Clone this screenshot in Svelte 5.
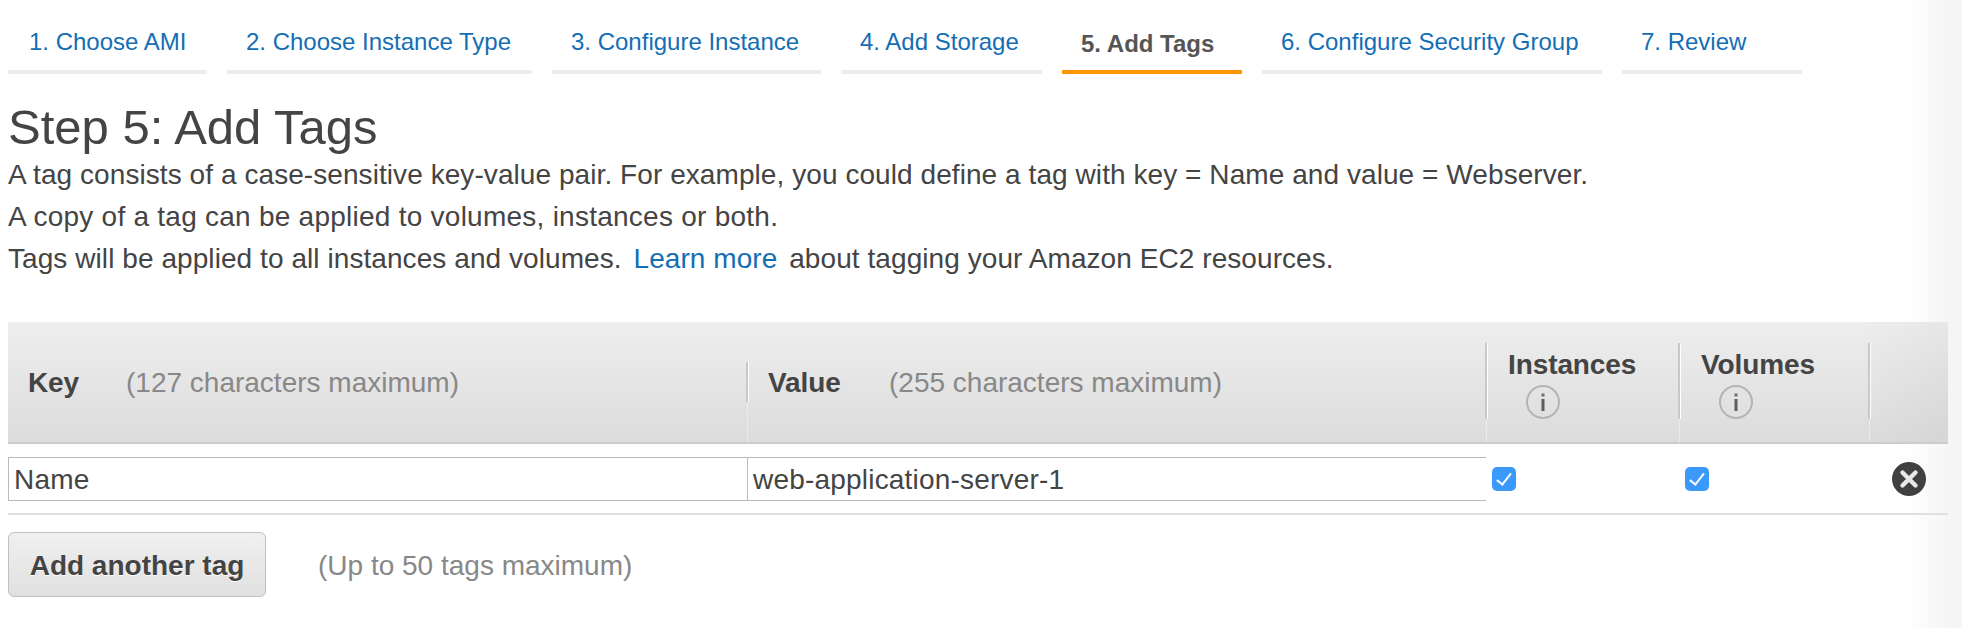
<script>
  const steps = [
    '1. Choose AMI',
    '2. Choose Instance Type',
    '3. Configure Instance',
    '4. Add Storage',
    '5. Add Tags',
    '6. Configure Security Group',
    '7. Review'
  ];
  const active = 4;

  let tagKey = $state('Name');
  let tagValue = $state('web-application-server-1');
  let onInstances = $state(true);
  let onVolumes = $state(true);
</script>

{#snippet infoIcon()}
  <svg class="info" width="36" height="36" viewBox="0 0 36 36" aria-hidden="true">
    <circle cx="18" cy="18" r="16" fill="none" stroke="#b4b4b4" stroke-width="2" />
    <rect x="16.5" y="15" width="3" height="12" fill="#5c5c5c" />
    <rect x="16.5" y="9.5" width="3" height="3" fill="#707070" />
  </svg>
{/snippet}

<div class="page">
  <nav class="steps">
    {#each steps as step, i}
      <a href="#step" class="step" class:active={i === active}>{step}</a>
    {/each}
  </nav>

  <h1>Step 5: Add Tags</h1>
  <div class="intro">
    <p>A tag consists of a case-sensitive key-value pair. For example, you could define a tag with key = Name and value = Webserver.</p>
    <p>A copy of a tag can be applied to volumes, instances or both.</p>
    <p>Tags will be applied to all instances and volumes. <a href="#learn">Learn more</a> about tagging your Amazon EC2 resources.</p>
  </div>

  <div class="table">
    <div class="head">
      <div class="th text"><b>Key</b><span class="hint">(127 characters maximum)</span></div>
      <div class="th text divided"><b>Value</b><span class="hint">(255 characters maximum)</span></div>
      <div class="th check tall">
        <b>Instances</b>
        {@render infoIcon()}
      </div>
      <div class="th check tall">
        <b>Volumes</b>
        {@render infoIcon()}
      </div>
      <div class="th last tall"></div>
    </div>
    <div class="row">
      <input class="cell-input" bind:value={tagKey} />
      <input class="cell-input second" bind:value={tagValue} />
      <div class="cell"><input type="checkbox" bind:checked={onInstances} /></div>
      <div class="cell"><input type="checkbox" bind:checked={onVolumes} /></div>
      <div class="cell remove">
        <svg width="36" height="36" viewBox="0 0 36 36" aria-label="Remove tag">
          <circle cx="18" cy="18" r="17" fill="#404040" />
          <path d="M11.5 11.5l13 13M24.5 11.5l-13 13" stroke="#e8e8e8" stroke-width="4.4" stroke-linecap="round" />
        </svg>
      </div>
    </div>
  </div>

  <div class="actions">
    <button type="button">Add another tag</button>
    <span class="hint">(Up to 50 tags maximum)</span>
  </div>
</div>

<style>
  :global(body) {
    margin: 0;
  }

  .page {
    box-sizing: border-box;
    height: 628px;
    padding: 0 14px 0 8px;
    font-family: "Liberation Sans", Arial, sans-serif;
    color: #444;
    background: linear-gradient(to right, #fff 1905px, #f5f5f5 1950px);
  }

  .steps {
    display: grid;
    grid-template-columns: 199px 305px 269px 201px 180px 340px 180px;
    gap: 20px;
    padding-top: 22px;
  }

  .step {
    padding-left: 19px;
    height: 48px;
    line-height: 40px;
    font-size: 24px;
    white-space: nowrap;
    color: #146eb4;
    text-decoration: none;
    border-bottom: 4px solid #ececec;
  }

  .step:first-child {
    padding-left: 21px;
  }

  .step.active {
    color: #555;
    font-weight: bold;
    border-bottom-color: #f90;
    line-height: 44px;
  }

  h1 {
    margin: 26px 0 0;
    font-size: 49px;
    font-weight: normal;
    line-height: 54px;
    color: #444;
  }

  .intro p {
    margin: 0;
    font-size: 28px;
    line-height: 42px;
    letter-spacing: 0.07px;
  }

  .intro p:nth-child(2) {
    letter-spacing: 0.25px;
  }

  .intro a {
    color: #146eb4;
    text-decoration: none;
    margin: 0 4px;
  }

  .table {
    margin-top: 42px;
  }

  .head,
  .row {
    display: grid;
    grid-template-columns: 739px 739px 193px 190px 1fr;
  }

  .head {
    height: 120px;
    border-bottom: 2px solid #ccc;
    background:
      linear-gradient(to right, transparent 1850px, rgba(0, 0, 0, 0.03)),
      linear-gradient(#eee, #dcdcdc);
  }

  .th {
    position: relative;
    display: flex;
    box-sizing: border-box;
    border-left: 1px solid #eaeaea;
  }

  .th:first-child {
    border-left: 0;
  }

  .th b {
    font-size: 28px;
    letter-spacing: -0.1px;
    color: #444;
  }

  .th.text {
    align-items: center;
    padding-left: 20px;
    padding-top: 2px;
  }

  .th.text b {
    min-width: 98px;
  }

  .th.text.divided b {
    min-width: 121px;
  }

  .th .hint {
    font-size: 28px;
  }

  .hint {
    color: #888;
  }

  .th.divided::before,
  .th.tall::before {
    content: "";
    position: absolute;
    left: -2px;
    width: 2px;
    background: #c8c8c8;
    border-right: 1px solid #fff;
  }

  .th.divided::before {
    top: 40px;
    height: 40px;
  }

  .th.tall::before {
    top: 21px;
    height: 76px;
  }

  .th.check {
    flex-direction: column;
    padding: 27px 0 0 21px;
  }

  .th.check b {
    line-height: 32px;
  }

  .info {
    margin: 3px 0 0 17px;
  }

  .row {
    height: 71px;
    box-sizing: border-box;
    align-items: center;
    border-bottom: 2px solid #e0e0e0;
  }

  .cell-input {
    box-sizing: border-box;
    height: 44px;
    width: 100%;
    margin: 0;
    padding: 2px 5px 0;
    border: 1px solid #bbb;
    border-right: 0;
    border-radius: 0;
    outline: 0;
    font: 28px "Liberation Sans", Arial, sans-serif;
    letter-spacing: 0.2px;
    color: #444;
  }

  .cell {
    display: flex;
    align-items: center;
    padding-left: 6px;
  }

  input[type="checkbox"] {
    appearance: none;
    width: 24px;
    height: 24px;
    margin: 0;
    border-radius: 5px;
    background: #3b99fc;
    position: relative;
  }

  input[type="checkbox"]:checked::after {
    content: "";
    position: absolute;
    left: 8px;
    top: 3px;
    width: 6px;
    height: 13px;
    border: solid #fff;
    border-width: 0 2.5px 2.5px 0;
    transform: rotate(38deg);
  }

  .remove {
    padding-left: 22px;
  }

  .actions {
    display: flex;
    align-items: center;
    gap: 50px;
    margin-top: 17px;
  }

  button {
    box-sizing: border-box;
    width: 258px;
    height: 65px;
    border: 1px solid #c0c0c0;
    border-radius: 6px;
    background: linear-gradient(#f0f0f0, #e0e0e0);
    font: bold 28px "Liberation Sans", Arial, sans-serif;
    color: #444;
    text-shadow: 0 1px 0 #fff;
    padding: 2px 0 0;
  }

  .actions .hint {
    font-size: 28px;
    margin: 2px 0 0 2px;
  }
</style>
